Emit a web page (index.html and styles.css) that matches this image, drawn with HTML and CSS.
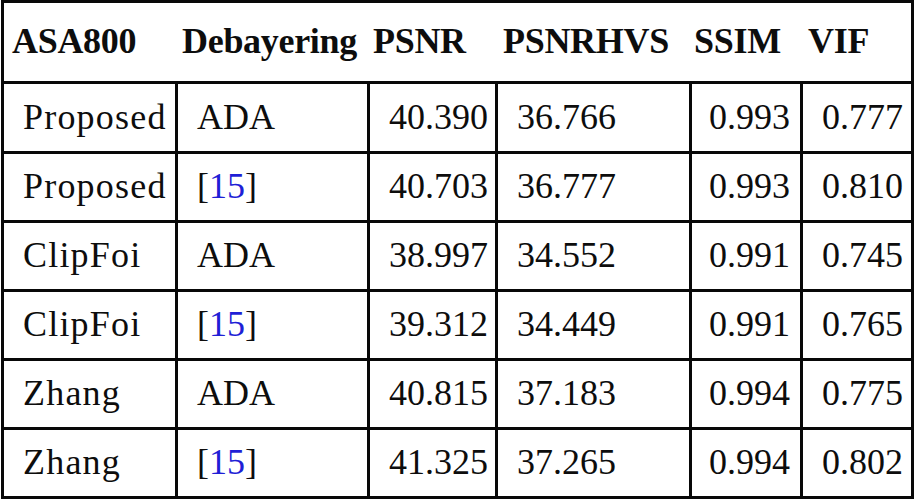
FILE: index.html
```html
<!DOCTYPE html>
<html lang="en">
<head>
<meta charset="utf-8">
<title>ASA800 results</title>
<link rel="stylesheet" href="styles.css">
</head>
<body>
<table class="results">
  <colgroup>
    <col class="c1"><col class="c2"><col class="c3"><col class="c4"><col class="c5"><col class="c6">
  </colgroup>
  <thead>
    <tr class="head-row">
      <th class="h1">ASA800</th>
      <th class="h2">Debayering</th>
      <th class="h3">PSNR</th>
      <th class="h4">PSNRHVS</th>
      <th class="h5">SSIM</th>
      <th class="h6">VIF</th>
    </tr>
  </thead>
  <tbody>
    <tr>
      <td class="name">Proposed</td><td class="deb">ADA</td><td class="psnr">40.390</td><td class="hvs">36.766</td><td class="ssim">0.993</td><td class="vif">0.777</td>
    </tr>
    <tr>
      <td class="name">Proposed</td><td class="deb">[<span class="ref">15</span>]</td><td class="psnr">40.703</td><td class="hvs">36.777</td><td class="ssim">0.993</td><td class="vif">0.810</td>
    </tr>
    <tr>
      <td class="name">ClipFoi</td><td class="deb">ADA</td><td class="psnr">38.997</td><td class="hvs">34.552</td><td class="ssim">0.991</td><td class="vif">0.745</td>
    </tr>
    <tr>
      <td class="name">ClipFoi</td><td class="deb">[<span class="ref">15</span>]</td><td class="psnr">39.312</td><td class="hvs">34.449</td><td class="ssim">0.991</td><td class="vif">0.765</td>
    </tr>
    <tr>
      <td class="name">Zhang</td><td class="deb">ADA</td><td class="psnr">40.815</td><td class="hvs">37.183</td><td class="ssim">0.994</td><td class="vif">0.775</td>
    </tr>
    <tr>
      <td class="name">Zhang</td><td class="deb">[<span class="ref">15</span>]</td><td class="psnr">41.325</td><td class="hvs">37.265</td><td class="ssim">0.994</td><td class="vif">0.802</td>
    </tr>
  </tbody>
</table>
</body>
</html>
```
FILE: styles.css
```css
html, body {
  margin: 0;
  padding: 0;
  background: #ffffff;
}

.results {
  margin: 0 0 0 1px;
  box-sizing: border-box;
  width: 913px;
  table-layout: fixed;
  border-collapse: separate;
  border-spacing: 0;
  border: 3px solid #080808;
  font-family: "Liberation Serif", "Times New Roman", serif;
  font-size: 36px;
  color: #0d0d0d;
}

.c1 { width: 174px; }
.c2 { width: 192px; }
.c3 { width: 128px; }
.c4 { width: 194px; }
.c5 { width: 111px; }
.c6 { width: 108px; }

.results th,
.results td {
  box-sizing: border-box;
  padding: 0;
  vertical-align: middle;
  white-space: nowrap;
  line-height: 1.1;
}

.results th {
  font-weight: bold;
  text-align: left;
  border-bottom: 3px solid #080808;
  letter-spacing: -0.3px;
}

.head-row { height: 81px; }

.results th.h1 { padding-left: 8px; }
.results th.h2 { padding-left: 4px; }
.results th.h3 { padding-left: 3px; }
.results th.h4 { padding-left: 5px; }
.results th.h5 { padding-left: 2px; }
.results th.h6 { padding-left: 5px; }

.results tbody tr { height: 69px; }
.results tbody tr:first-child { height: 70px; }
.results tbody tr:last-child { height: 66px; }

.results td {
  border-right: 3px solid #080808;
  border-bottom: 3px solid #080808;
}

.results tbody tr:last-child td { border-bottom: none; }
.results td.vif { border-right: none; }

.results td.name {
  padding-left: 19px;
  letter-spacing: 1.2px;
}

.results td.deb { padding-left: 19px; }

.results td.psnr {
  text-align: right;
  padding-right: 7px;
}

.results td.hvs { padding-left: 19px; }

.results td.ssim {
  text-align: right;
  padding-right: 10px;
}

.results td.vif { padding-left: 19px; }

.ref { color: #1f1fd6; }
```
